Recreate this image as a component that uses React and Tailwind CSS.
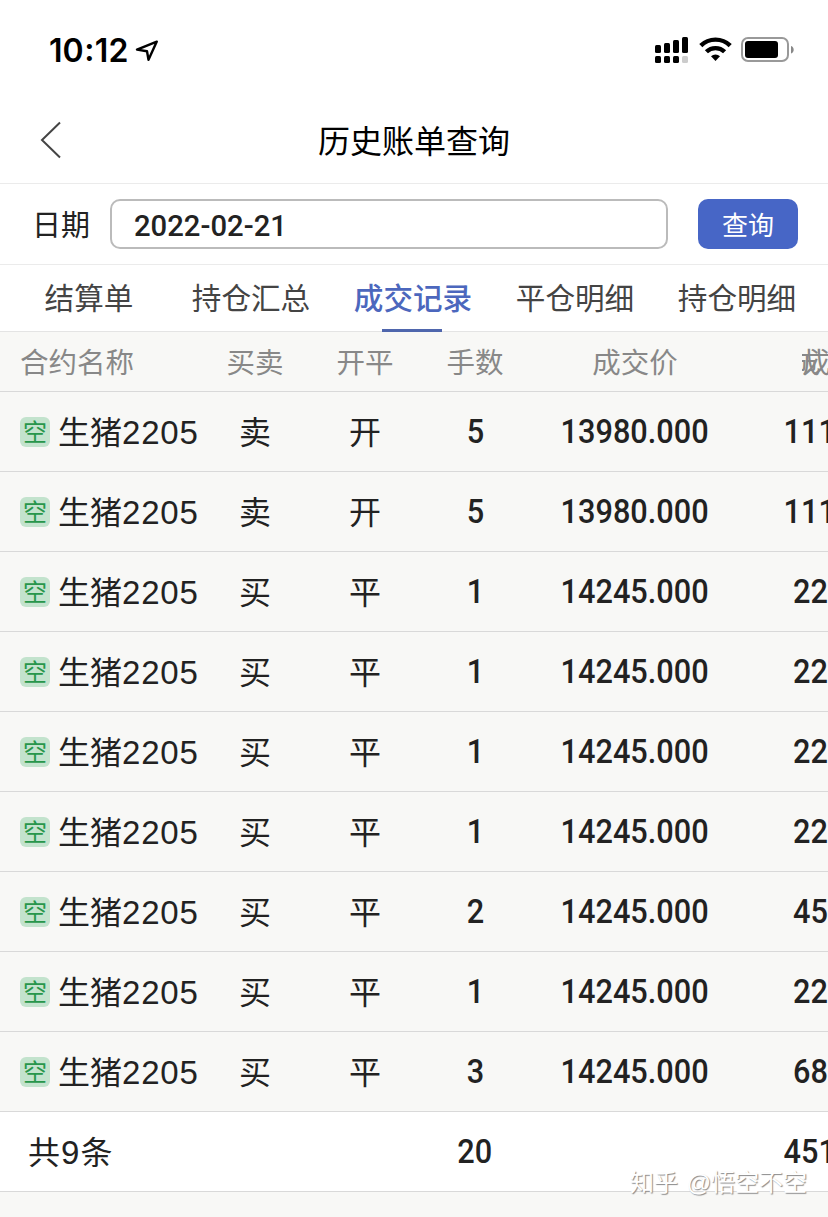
import clsx from 'clsx';

const tabs = ['结算单', '持仓汇总', '成交记录', '平仓明细', '持仓明细'];

const sell = { side: '卖', offset: '开', lots: 5, price: '13980.000', amount: '1118400' };
const buy = (lots, amount) => ({ side: '买', offset: '平', lots, price: '14245.000', amount });

const records = [
    sell,
    sell,
    buy(1, '227920'),
    buy(1, '227920'),
    buy(1, '227920'),
    buy(1, '227920'),
    buy(2, '455840'),
    buy(1, '227920'),
    buy(3, '683760')
];

// name | side | offset | lots | price | amount, last column runs off the screen
const rowGrid = 'grid w-[950px] grid-cols-[200px_110px_110px_110px_210px_210px] items-center border-b border-[#d9d9d9]';
const numFont = "font-['Roboto','Noto_Sans_CJK_SC',sans-serif] font-medium";

function Num({ children }) {
    return (
        <div className={numFont}>
            <span className="inline-block scale-x-[.93] text-[33px] leading-10">{children}</span>
        </div>
    );
}

function StatusBar() {
    return (
        <div className="flex h-[98px] items-center justify-between pr-[34px] pl-[49px]">
            <div className="flex items-center gap-[7px] pt-[3px] text-black">
                <span className="font-['Inter',sans-serif] text-[32px] leading-10 font-semibold">
                    10<span className="inline-block -translate-y-px px-[0.5px]">:</span>12
                </span>
                <svg width="24" height="24" viewBox="0 0 24 24" fill="none" stroke="currentColor" strokeWidth="2.4" strokeLinejoin="round">
                    <path d="M21.8 2.6 2 10.6l10 1.6 1.5 8.6z" />
                </svg>
            </div>
            <div className="flex items-center">
                <svg width="34" height="28" viewBox="0 0 34 28">
                    <rect x="0" y="10" width="6" height="8" rx="1.5" />
                    <rect x="9" y="8" width="6" height="10" rx="1.5" />
                    <rect x="18" y="5" width="6" height="13" rx="1.5" />
                    <rect x="27" y="2" width="6" height="16" rx="1.5" />
                    <rect x="0" y="21" width="6" height="7" rx="1.5" />
                    <rect x="9" y="21" width="6" height="7" rx="1.5" />
                    <rect x="18" y="21" width="6" height="7" rx="1.5" />
                    <rect x="27" y="21" width="6" height="7" rx="1.5" fill="#ccc" />
                </svg>
                <svg className="ml-[10px]" width="33" height="26" viewBox="0 0 33 26" fill="none" stroke="#000" strokeWidth="4.4">
                    <path d="M1.8 9.6a21 21 0 0 1 29.4 0" />
                    <path d="M7.4 15.8a13 13 0 0 1 18.2 0" />
                    <path d="M16.5 25 12 20.3a6.6 6.6 0 0 1 9 0z" fill="#000" stroke="none" />
                </svg>
                <svg className="mt-px ml-[9px]" width="53" height="26" viewBox="0 0 53 26">
                    <rect x="1" y="1" width="46" height="23" rx="6" fill="none" stroke="#999" strokeWidth="2" />
                    <rect x="4" y="4" width="33" height="17" rx="3" />
                    <path d="M50 9c3.6 1 3.6 6.6 0 7.6z" fill="#888" />
                </svg>
            </div>
        </div>
    );
}

export default function App() {
    return (
        <div className="relative h-[1217px] w-[828px] overflow-hidden bg-white font-['Liberation_Sans','Noto_Sans_CJK_SC',sans-serif] text-[#222]">
            <StatusBar />

            {/* Title */}
            <div className="grid h-[86px] grid-cols-[100px_1fr_100px] items-center border-b border-[#ebebeb]">
                <svg className="mb-0.5 ml-[40px]" width="22" height="38" viewBox="0 0 22 38" fill="none" stroke="#444" strokeWidth="2">
                    <path d="M20 1.5 2 19l18 17.5" />
                </svg>
                <h1 className="pt-0.5 text-center text-[32px] leading-10 text-black">历史账单查询</h1>
            </div>

            {/* Date query */}
            <div className="flex h-[81px] items-center border-b border-[#ebebeb] pr-[30px] pl-8">
                <span className="w-[78px] pt-1 text-[29px] leading-10">日期</span>
                <div className={clsx('flex h-[50px] w-[558px] items-center rounded-[10px] border-2 border-[#bbb] pt-0.5 pl-[22px] text-[30px]', numFont)}>
                    <span className="origin-left scale-x-[.975]">2022-02-21</span>
                </div>
                <button className="ml-[30px] h-[50px] w-[100px] rounded-[10px] bg-[#4766c6] pt-1 text-[26px] text-white">查询</button>
            </div>

            {/* Tabs */}
            <div className="grid h-[67px] grid-cols-5 border-b border-[#e4e4e4] pr-[10px] pl-2">
                {tabs.map((tab) => (
                    <div
                        key={tab}
                        className={clsx('relative pt-[14px] text-center text-[29.6px] leading-10', tab === '成交记录' ? 'font-medium text-[#4c67bd]' : 'text-[#444]')}
                    >
                        {tab}
                        {tab === '成交记录' && <div className="absolute -bottom-px left-[50px] h-[3px] w-[60px] bg-[#4f66ad]" />}
                    </div>
                ))}
            </div>

            {/* Records */}
            <div className="h-full bg-[#f8f8f6]">
                <div className={clsx(rowGrid, 'h-[60px] pt-[3px] text-center text-[28.5px] text-[#888]')}>
                    <div className="pl-5 text-left">合约名称</div>
                    <div>买卖</div>
                    <div>开平</div>
                    <div>手数</div>
                    <div>成交价</div>
                    <div className="grid justify-center leading-10">
                        <span className="col-start-1 row-start-1">成交额</span>
                        <span className="col-start-1 row-start-1 h-10 w-[19px] overflow-hidden text-left" aria-hidden="true">
                            <span className="-ml-[10px] block w-8">成</span>
                        </span>
                    </div>
                </div>

                {records.map((row, idx) => (
                    <div key={idx} className={clsx(rowGrid, 'h-20 text-center text-[32px]')}>
                        <div className="flex items-center pl-5 text-left whitespace-nowrap">
                            <span className="flex h-[30px] w-[30px] items-center justify-center rounded-md bg-[#c3e3cd] pt-0.5 text-[24px] leading-none text-[#28964b]">空</span>
                            <span className="ml-2 pt-0.5">
                                生猪<span className="text-[33px] leading-none tracking-[0.8px]">2205</span>
                            </span>
                        </div>
                        <div className="pt-0.5">{row.side}</div>
                        <div className="pt-0.5">{row.offset}</div>
                        <Num>{row.lots}</Num>
                        <Num>{row.price}</Num>
                        <Num>{row.amount}</Num>
                    </div>
                ))}

                <div className={clsx(rowGrid, 'h-20 bg-white text-center text-[32px]')}>
                    <div className="pt-0.5 pl-7 text-left">
                        共<span className="px-px text-[33px] leading-none">9</span>条
                    </div>
                    <div />
                    <div />
                    <Num>20</Num>
                    <div />
                    <Num>4516000</Num>
                </div>
            </div>

            <div className="absolute top-[1167px] right-[21px] text-[24px] leading-8 [word-spacing:2px] text-white [text-shadow:1px_1px_1px_#888]">知乎 @悟空不空</div>
        </div>
    );
}
